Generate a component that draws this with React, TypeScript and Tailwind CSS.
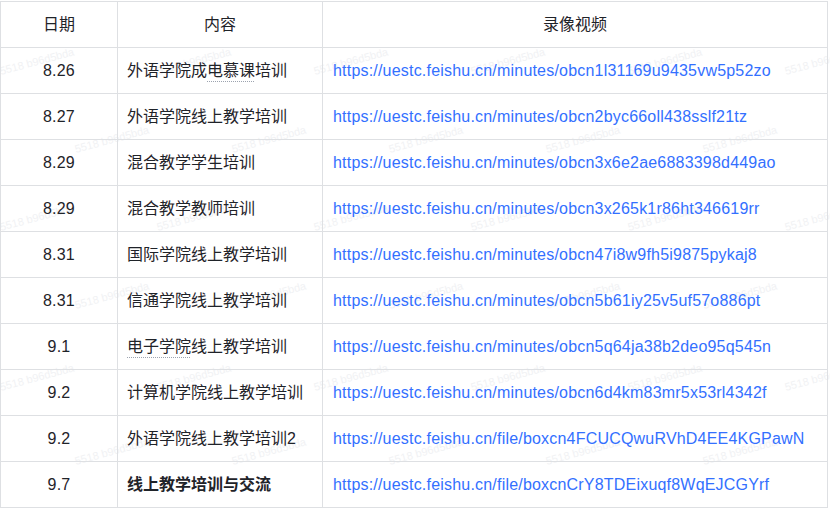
import React from "react";

const rows: { d: string; c: string; u: string; bold?: boolean; dot?: [number, number] }[] = [
  { d: "8.26", c: "外语学院成电慕课培训", u: "https://uestc.feishu.cn/minutes/obcn1l31169u9435vw5p52zo", dot: [5, 8] },
  { d: "8.27", c: "外语学院线上教学培训", u: "https://uestc.feishu.cn/minutes/obcn2byc66oll438sslf21tz" },
  { d: "8.29", c: "混合教学学生培训", u: "https://uestc.feishu.cn/minutes/obcn3x6e2ae6883398d449ao" },
  { d: "8.29", c: "混合教学教师培训", u: "https://uestc.feishu.cn/minutes/obcn3x265k1r86ht346619rr" },
  { d: "8.31", c: "国际学院线上教学培训", u: "https://uestc.feishu.cn/minutes/obcn47i8w9fh5i9875pykaj8" },
  { d: "8.31", c: "信通学院线上教学培训", u: "https://uestc.feishu.cn/minutes/obcn5b61iy25v5uf57o886pt" },
  { d: "9.1", c: "电子学院线上教学培训", u: "https://uestc.feishu.cn/minutes/obcn5q64ja38b2deo95q545n", dot: [0, 4] },
  { d: "9.2", c: "计算机学院线上教学培训", u: "https://uestc.feishu.cn/minutes/obcn6d4km83mr5x53rl4342f" },
  { d: "9.2", c: "外语学院线上教学培训2", u: "https://uestc.feishu.cn/file/boxcn4FCUCQwuRVhD4EE4KGPawN" },
  { d: "9.7", c: "线上教学培训与交流", u: "https://uestc.feishu.cn/file/boxcnCrY8TDEixuqf8WqEJCGYrf", bold: true },
];

const marks: [number, number][] = [];
for (const y of [66, 222, 382]) for (let x = 0; x < 800; x += 157) marks.push([x, y]);
for (const y of [144, 300, 456]) for (let x = 75; x < 800; x += 157) marks.push([x, y]);

function Content({ r }: { r: (typeof rows)[number] }) {
  if (!r.dot) return <>{r.c}</>;
  const [a, b] = r.dot;
  return (
    <>
      {r.c.slice(0, a)}
      <span className="underline decoration-dotted decoration-[#9ca3af] underline-offset-[5px] decoration-1">
        {r.c.slice(a, b)}
      </span>
      {r.c.slice(b)}
    </>
  );
}

export default function App() {
  return (
    <div
      className="relative w-[830px] h-[510px] bg-white overflow-hidden pt-px text-[16px] text-[#1f2329]"
      style={{ fontFamily: '"Liberation Sans", Arial, "Noto Sans CJK SC", sans-serif' }}
    >
      {marks.map(([x, y], i) => (
        <div
          key={i}
          className="absolute pointer-events-none text-[11px] leading-none text-[#f1f2f4] whitespace-nowrap -rotate-[15deg] origin-left"
          style={{ left: x, top: y }}
        >
          5518 b96d5bda
        </div>
      ))}
      <table className="relative table-fixed border-collapse w-[827px]">
        <colgroup>
          <col className="w-[117px]" />
          <col className="w-[205px]" />
          <col className="w-[505px]" />
        </colgroup>
        <thead>
          <tr className="h-[46px]">
            <th className="border border-[#dee0e3] font-normal text-center">日期</th>
            <th className="border border-[#dee0e3] font-normal text-center">内容</th>
            <th className="border border-[#dee0e3] font-normal text-center">录像视频</th>
          </tr>
        </thead>
        <tbody>
          {rows.map((r, i) => (
            <tr key={i} className="h-[46px]">
              <td className="border border-[#dee0e3] text-center tracking-[0.2px]">{r.d}</td>
              <td className={"border border-[#dee0e3] pl-[9px] whitespace-nowrap " + (r.bold ? "font-bold" : "")}>
                <Content r={r} />
              </td>
              <td className="border border-[#dee0e3] pl-[10px] whitespace-nowrap text-[#3370ff] tracking-[0.2px]">{r.u}</td>
            </tr>
          ))}
        </tbody>
      </table>
    </div>
  );
}
